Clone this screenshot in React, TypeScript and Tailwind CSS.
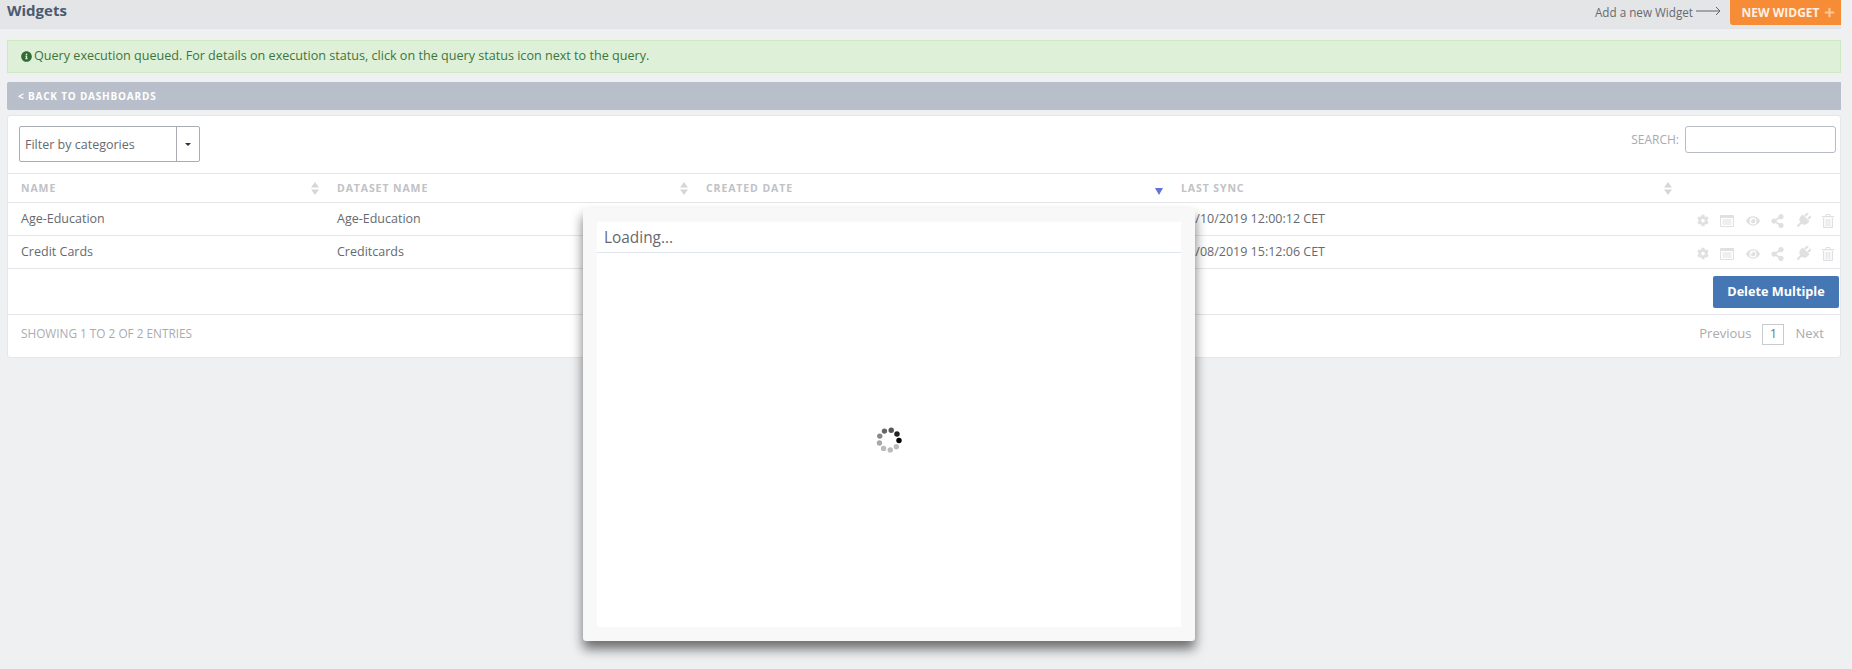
import { FaCog, FaEye, FaInfoCircle, FaPlus, FaShareAlt } from 'react-icons/fa';

const COLUMNS = [
  { label: 'NAME', width: 'w-[316px]', sort: 'both' },
  { label: 'DATASET NAME', width: 'w-[369px]', sort: 'both' },
  { label: 'CREATED DATE', width: 'w-[475px]', sort: 'desc' },
  { label: 'LAST SYNC', width: 'w-[509px]', sort: 'both' },
];

const ROWS = [
  { name: 'Age-Education', dataset: 'Age-Education', sync: '01/10/2019 12:00:12 CET' },
  { name: 'Credit Cards', dataset: 'Creditcards', sync: '01/08/2019 15:12:06 CET' },
];

const SPINNER_DOTS = ['#000000', '#222222', '#555555', '#666666', '#888888', '#a8a8a8', '#bbbbbb', '#bbbbbb', '#bbbbbb'];

function SortIcon({ sort }: { sort: string }) {
  if (sort === 'desc') {
    return (
      <svg width="8" height="7" viewBox="0 0 8 7" className="mt-[6px]">
        <path d="M0 0h8L4 7z" fill="#6272d8" />
      </svg>
    );
  }
  return (
    <svg width="8" height="13" viewBox="0 0 8 13">
      <path d="M4 0l4 5.500H0zM0 7.500h8L4 13z" fill="#d4d6d9" />
    </svg>
  );
}

function Spinner() {
  return (
    <svg width="28" height="28" viewBox="0 0 28 28">
      {SPINNER_DOTS.map((fill, i) => {
        const a = (-i * 2 * Math.PI) / 9 + 0.05;
        return <circle key={i} cx={14 + 10 * Math.cos(a)} cy={14 + 10 * Math.sin(a)} r="2.700" fill={fill} />;
      })}
    </svg>
  );
}

function ListIcon() {
  return (
    <svg width="14" height="12" viewBox="0 0 14 12" fill="currentColor">
      <path fillRule="evenodd" d="M0 1a1 1 0 0 1 1-1h12a1 1 0 0 1 1 1v10a1 1 0 0 1-1 1H1a1 1 0 0 1-1-1zM1 3v8h12V3z" />
      <path d="M2.500 4.500h9v1h-9zM2.500 6.500h9v1h-9zM2.500 8.500h9v1h-9z" />
    </svg>
  );
}

function PlugIcon() {
  return (
    <svg width="15" height="15" viewBox="0 0 14 14" fill="currentColor">
      <g transform="rotate(45 7 7)">
        <path d="M4 -1h2v4H4zM8 -1h2v4H8z" />
        <path d="M2.500 3.500h9v2.500a4.500 4.500 0 0 1-3.500 4.400V15H6v-4.600A4.500 4.500 0 0 1 2.500 6z" />
      </g>
    </svg>
  );
}

function TrashIcon() {
  return (
    <svg width="12" height="14" viewBox="0 0 12 14" fill="currentColor">
      <path d="M4 0h4l.8 2H12v1.200H0V2h3.200zM4.700 1.100L4.400 2h3.200l-.3-.9z" />
      <path fillRule="evenodd" d="M1 4h10v9a1 1 0 0 1-1 1H2a1 1 0 0 1-1-1zM2.200 4v8.800h7.600V4z" />
      <path d="M3.700 5h1v7h-1zM5.500 5h1v7h-1zM7.300 5h1v7h-1z" />
    </svg>
  );
}

function RowActions() {
  return (
    <div className="flex flex-1 items-center justify-end gap-[11.4px] pt-[3px] pr-[6px] text-[#dfe0e2]">
      <FaCog className="h-[13px] w-[12px]" />
      <ListIcon />
      <FaEye className="h-[14px] w-[14px]" />
      <FaShareAlt className="h-[14px] w-[13px]" />
      <PlugIcon />
      <TrashIcon />
    </div>
  );
}

export default function App() {
  return (
    <div className="relative h-[669px] w-[1852px] overflow-hidden bg-[#eff0f2] font-['Open_Sans',sans-serif]">
      <div className="w-[1841px]">
        <header className="flex h-[29px] items-start justify-between border-b border-[#e0e2e6] bg-[#e4e5e7] pl-[7px]">
          <h1 className="mt-[1px] text-[15px] leading-[18px] font-bold text-[#4a5a70]">Widgets</h1>
          <div className="flex items-start">
            <span className="mt-[4px] text-[11.700px] leading-[17px] text-[#666a70]">Add a new Widget</span>
            <svg width="25" height="10" viewBox="0 0 25 10" className="mt-[6px] mr-[9px] ml-[3px]">
              <path d="M0 5h24M20 1l4 4-4 4" stroke="#5f6368" fill="none" />
            </svg>
            <button className="flex h-[25px] w-[111px] items-center justify-center gap-[4px] rounded-bl-[3px] bg-[#f68c36] pl-[5px] text-[12px] font-bold text-[#fdf0e4]">
              NEW WIDGET
              <FaPlus className="h-[11px] w-[11px] text-[#fbc896]" />
            </button>
          </div>
        </header>

        <div className="mt-[11px] ml-[7px] flex h-[33px] items-center gap-[2px] border border-[#cfe8c0] bg-[#dff0d8] pl-[13px] text-[12.600px] text-[#3c763d]">
          <FaInfoCircle className="h-[11px] w-[11px] text-[#2f6b33]" />
          <span>Query execution queued. For details on execution status, click on the query status icon next to the query.</span>
        </div>

        <div className="mt-[9px] ml-[7px] flex h-[28px] items-center rounded-l-[2px] bg-[#b8bfca] pl-[11px] text-[10px] font-bold tracking-[0.8px] text-white">
          &lt; BACK TO DASHBOARDS
        </div>

        <section className="mt-[5px] ml-[7px] h-[243px] rounded-[3px] border border-[#e4e6e9] bg-white">
          <div className="flex h-[57px] items-start justify-between pt-[10px] pr-[4px] pl-[11px]">
            <div className="flex h-[36px] w-[181px] rounded-[2px] border border-[#a9adb3]">
              <span className="flex flex-1 items-center pt-[2px] pl-[5px] text-[12.500px] text-[#666a70]">Filter by categories</span>
              <span className="flex w-[23px] items-center justify-center border-l border-[#a9adb3]">
                <span className="h-0 w-0 border-x-[3px] border-t-[3px] border-x-transparent border-t-[#333]" />
              </span>
            </div>
            <div className="flex items-center gap-[6px]">
              <span className="text-[12px] text-[#a8abb0]">SEARCH:</span>
              <input className="h-[27px] w-[151px] rounded-[3px] border border-[#b8bcc4] bg-white" />
            </div>
          </div>

          <div className="flex h-[29px] items-center border-t border-[#e4e6e9] pt-[1px] pl-[13px]">
            {COLUMNS.map((col) => (
              <div key={col.label} className={`${col.width} flex items-center justify-between pr-[18px]`}>
                <span className="text-[10.500px] font-bold tracking-[0.9px] text-[#c0c2c6]">{col.label}</span>
                <SortIcon sort={col.sort} />
              </div>
            ))}
          </div>

          {ROWS.map((row) => (
            <div key={row.name} className="flex h-[33px] items-center border-t border-[#e4e6e9] pl-[13px] text-[12.500px] text-[#666a70]">
              <div className="w-[316px]">{row.name}</div>
              <div className="w-[369px]">{row.dataset}</div>
              <div className="w-[475px]" />
              <div className="w-[495px]">{row.sync}</div>
              <RowActions />
            </div>
          ))}

          <div className="flex h-[46px] items-start justify-end border-t border-[#e4e6e9] pt-[7px] pr-[1px]">
            <button className="h-[32px] w-[126px] rounded-[2px] bg-[#4477b3] text-[12.700px] font-bold text-white">Delete Multiple</button>
          </div>

          <div className="flex h-[42px] items-center justify-between border-t border-[#e4e6e9] pr-[16px] pb-[3px] pl-[13px] text-[11.800px] text-[#a8abb0]">
            <span>SHOWING 1 TO 2 OF 2 ENTRIES</span>
            <div className="flex items-center gap-[11px] text-[13px]">
              <span>Previous</span>
              <span className="flex h-[21px] w-[22px] items-center justify-center border border-[#c9cbcf] text-[#777]">1</span>
              <span>Next</span>
            </div>
          </div>
        </section>
      </div>

      <div className="absolute top-[208px] left-[583px] flex h-[433px] w-[612px] rounded-[3px] bg-[#f8f8f8] p-[14px] shadow-[0_8px_12px_rgba(0,0,0,0.55)]">
        <div className="flex w-full flex-col bg-white">
          <div className="flex h-[31px] items-center border-b border-[#dfe5ea] pt-[2px] pl-[7px] text-[15.400px] text-[#666a70]">Loading...</div>
          <div className="flex flex-1 items-center justify-center">
            <Spinner />
          </div>
        </div>
      </div>
    </div>
  );
}
